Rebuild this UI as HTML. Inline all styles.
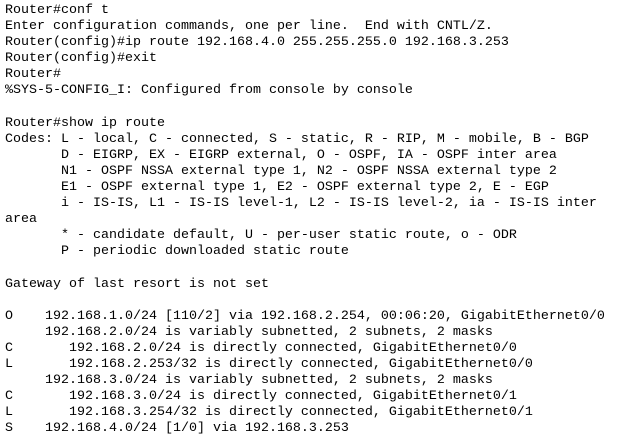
<!DOCTYPE html>
<html><head><meta charset="utf-8"><style>
html,body{margin:0;padding:0;background:#fff;width:617px;height:445px;overflow:hidden}
pre{margin:0;position:absolute;left:5px;top:3px;font-family:"Liberation Mono","Courier New",monospace;font-size:13.33px;line-height:16.1px;color:#000}
</style></head><body><pre>Router#conf t
Enter configuration commands, one per line.  End with CNTL/Z.
Router(config)#ip route 192.168.4.0 255.255.255.0 192.168.3.253
Router(config)#exit
Router#
%SYS-5-CONFIG_I: Configured from console by console

Router#show ip route
Codes: L - local, C - connected, S - static, R - RIP, M - mobile, B - BGP
       D - EIGRP, EX - EIGRP external, O - OSPF, IA - OSPF inter area
       N1 - OSPF NSSA external type 1, N2 - OSPF NSSA external type 2
       E1 - OSPF external type 1, E2 - OSPF external type 2, E - EGP
       i - IS-IS, L1 - IS-IS level-1, L2 - IS-IS level-2, ia - IS-IS inter
area
       * - candidate default, U - per-user static route, o - ODR
       P - periodic downloaded static route

Gateway of last resort is not set

O    192.168.1.0/24 [110/2] via 192.168.2.254, 00:06:20, GigabitEthernet0/0
     192.168.2.0/24 is variably subnetted, 2 subnets, 2 masks
C       192.168.2.0/24 is directly connected, GigabitEthernet0/0
L       192.168.2.253/32 is directly connected, GigabitEthernet0/0
     192.168.3.0/24 is variably subnetted, 2 subnets, 2 masks
C       192.168.3.0/24 is directly connected, GigabitEthernet0/1
L       192.168.3.254/32 is directly connected, GigabitEthernet0/1
S    192.168.4.0/24 [1/0] via 192.168.3.253</pre></body></html>
